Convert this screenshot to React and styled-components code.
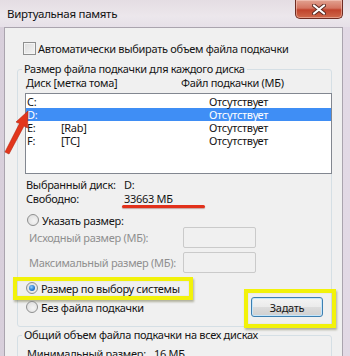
import styled, { createGlobalStyle } from "styled-components";

const GlobalStyle = createGlobalStyle`
  html, body {
    margin: 0;
    padding: 0;
  }
  body {
    font-family: "Noto Sans", "Open Sans", sans-serif;
    font-size: 11px;
    letter-spacing: -0.3px;
    color: #151515;
    white-space: nowrap;
  }
`;

const Window = styled.div`
  position: relative;
  width: 350px;
  height: 356px;
  overflow: hidden;
  display: flex;
  flex-direction: column;
  background: linear-gradient(90deg, #d8cfdb 0%, #e9e3ea 45%, #e2d9e5 100%);
`;

const TitleBar = styled.div`
  flex-shrink: 0;
  height: 27px;
  display: flex;
  align-items: flex-start;
  padding: 0 7px;
  background: linear-gradient(180deg, #e4dde3 0%, #ece7ec 60%, #e6e0e8 100%);
`;

const Title = styled.div`
  margin-top: 7px;
  line-height: 14px;
  font-size: 11.5px;
  color: #111;
`;

const CloseButton = styled.div`
  margin-left: auto;
  width: 46px;
  height: 18px;
  display: flex;
  align-items: center;
  justify-content: center;
  border: 1px solid #6e2c22;
  border-top: none;
  border-radius: 0 0 5px 5px;
  background: linear-gradient(180deg, #e2a291 0%, #d47561 45%, #c0432c 55%, #cf6a4c 100%);
  box-shadow: inset 0 0 0 1px rgba(255, 220, 210, 0.45);
`;

const Body = styled.div`
  flex: 1;
  margin: 0 7px 0 4px;
  padding: 13px 10px 0 12px;
  background: #f0f0f0;
  border: 1px solid #aaa4ae;
  border-bottom: none;
`;

const CheckRow = styled.label`
  display: flex;
  align-items: center;
  gap: 2px;
  height: 14px;
  margin-left: 6px;
`;

const CheckBox = styled.span`
  width: 13px;
  height: 13px;
  box-sizing: border-box;
  border: 1px solid #8e8f8f;
  background: linear-gradient(135deg, #dcdcdc 0%, #f4f4f4 100%);
  box-shadow: inset 0 0 0 1px #f4f4f4;
`;

const Group = styled.fieldset`
  margin: ${(p) => p.$top}px 0 0;
  padding: ${(p) => p.$pad || 0}px 0 ${(p) => p.$bottom || 0}px 8px;
  border: 1px solid #d5dfe5;
  border-radius: 3px;
  min-width: 0;
`;

const Legend = styled.legend`
  padding: 0 2px;
  margin-left: -4px;
  line-height: 14px;
`;

const Columns = styled.div`
  display: grid;
  grid-template-columns: ${(p) => p.$first}px 1fr;
  line-height: 14px;
  margin-top: ${(p) => p.$top || 0}px;
  margin-left: ${(p) => p.$left || 0}px;
`;

const ListBox = styled.div`
  width: 307px;
  height: 81px;
  box-sizing: border-box;
  margin: 3px 0 0 -1px;
  padding: 1px 0;
  border: 1px solid #828790;
  background: #fff;
`;

const DiskRow = styled.div`
  display: grid;
  grid-template-columns: 34px 148px 1fr;
  height: 13px;
  line-height: 13px;
  padding-left: 1px;
  background: ${(p) => (p.$selected ? "#3f8ef5" : "transparent")};
  color: ${(p) => (p.$selected ? "#fff" : "#151515")};
`;

const Value = styled.span`
  position: relative;
`;

const RedLine = styled.span`
  position: absolute;
  left: -2px;
  bottom: -2px;
  width: 83px;
  height: 3px;
  border-radius: 2px;
  background: #e2311b;
  box-shadow: 0 1px 1px rgba(120, 20, 10, 0.35);
`;

const RadioRow = styled.div`
  position: relative;
  display: flex;
  align-items: center;
  gap: 3px;
  height: 14px;
  margin-top: ${(p) => p.$top || 0}px;
  margin-left: ${(p) => p.$left || 0}px;
`;

const Radio = styled.span`
  width: 12px;
  height: 12px;
  box-sizing: border-box;
  border-radius: 50%;
  border: 1px solid #8e8f8f;
  background: radial-gradient(circle at 60% 60%, #f5f5f5 0%, #d9d9d9 100%);
  display: flex;
  align-items: center;
  justify-content: center;
  &::after {
    content: "";
    display: ${(p) => (p.$checked ? "block" : "none")};
    width: 6px;
    height: 6px;
    border-radius: 50%;
    background: radial-gradient(circle at 40% 35%, #8fd0ff 0%, #2a7bd0 55%, #1a4f95 100%);
  }
`;

const SizeRow = styled.div`
  display: grid;
  grid-template-columns: 154px 73px;
  align-items: center;
  margin-top: ${(p) => p.$top || 0}px;
  margin-left: 3px;
  color: #8f8f8f;
`;

const SizeInput = styled.div`
  height: 21px;
  box-sizing: border-box;
  border: 1px solid #cacaca;
  border-radius: 2px;
  background: #f0f0f0;
`;

const BottomRow = styled.div`
  display: flex;
  align-items: center;
  justify-content: space-between;
  margin-top: 2px;
  padding-right: 8px;
  height: 20px;
`;

const Marker = styled.span`
  position: absolute;
  left: ${(p) => p.$l}px;
  top: ${(p) => p.$t}px;
  width: ${(p) => p.$w}px;
  height: ${(p) => p.$h}px;
  box-sizing: border-box;
  border: 4px solid #f2f20a;
  box-shadow: 1px 2px 2px rgba(60, 60, 0, 0.35), inset 0 0 1px rgba(60, 60, 0, 0.3);
  pointer-events: none;
`;

const ButtonWrap = styled.div`
  position: relative;
`;

const Button = styled.button`
  display: block;
  width: 72px;
  height: 20px;
  padding: 0;
  font: inherit;
  letter-spacing: inherit;
  color: #151515;
  border: 1px solid #3c7fb1;
  border-radius: 3px;
  background: linear-gradient(180deg, #f4f4f4 0%, #ebebeb 48%, #dcdcdc 52%, #d0d0d0 100%);
  box-shadow: inset 0 0 0 1px #c5e6fb;
`;

const Arrow = styled.svg`
  position: absolute;
  left: 0;
  top: 0;
  pointer-events: none;
`;

const disks = [
  { letter: "C:", label: "", size: "Отсутствует" },
  { letter: "D:", label: "", size: "Отсутствует", selected: true },
  { letter: "E:", label: "[Rab]", size: "Отсутствует" },
  { letter: "F:", label: "[TC]", size: "Отсутствует" },
];

export default function App() {
  return (
    <>
      <GlobalStyle />
      <Window>
        <TitleBar>
          <Title>Виртуальная память</Title>
          <CloseButton>
            <svg width="14" height="11" viewBox="0 0 14 11">
              <path d="M2 1.5 L12 9.5 M12 1.5 L2 9.5" stroke="#5a2a22" strokeWidth="4" strokeLinecap="round" />
              <path d="M2 1.5 L12 9.5 M12 1.5 L2 9.5" stroke="#ffffff" strokeWidth="2.2" strokeLinecap="round" />
            </svg>
          </CloseButton>
        </TitleBar>
        <Body>
          <CheckRow>
            <CheckBox />
            <span>Автоматически выбирать объем файла подкачки</span>
          </CheckRow>

          <Group $top={7} $bottom={9}>
            <Legend>Размер файла подкачки для каждого диска</Legend>
            <Columns $first={155}>
              <span>Диск [метка тома]</span>
              <span>Файл подкачки (МБ)</span>
            </Columns>
            <ListBox>
              {disks.map((d) => (
                <DiskRow key={d.letter} $selected={d.selected}>
                  <span>{d.letter}</span>
                  <span>{d.label}</span>
                  <span>{d.size}</span>
                </DiskRow>
              ))}
            </ListBox>
            <Columns $first={98} $top={4}>
              <span>Выбранный диск:</span>
              <span>D:</span>
              <span>Свободно:</span>
              <Value>
                33663 МБ
                <RedLine />
              </Value>
            </Columns>

            <RadioRow $top={7} $left={1}>
              <Radio />
              <span>Указать размер:</span>
            </RadioRow>
            <SizeRow>
              <span>Исходный размер (МБ):</span>
              <SizeInput />
            </SizeRow>
            <SizeRow $top={4}>
              <span>Максимальный размер (МБ):</span>
              <SizeInput />
            </SizeRow>
            <RadioRow $top={8}>
              <Radio $checked />
              <span>Размер по выбору системы</span>
              <Marker $l={-13} $t={-4} $w={180} $h={23} />
            </RadioRow>
            <BottomRow>
              <RadioRow>
                <Radio />
                <span>Без файла подкачки</span>
              </RadioRow>
              <ButtonWrap>
                <Button>Задать</Button>
                <Marker $l={-7} $t={-8} $w={92} $h={39} />
              </ButtonWrap>
            </BottomRow>
          </Group>

          <Group $top={1} $pad={5}>
            <Legend>Общий объем файла подкачки на всех дисках</Legend>
            <Columns $first={127} $left={1}>
              <span>Минимальный размер:</span>
              <span>16 МБ</span>
            </Columns>
          </Group>
        </Body>
        <Arrow width="40" height="160" viewBox="0 0 40 160">
          <polygon
            points="28,111 27.5,128 24,126 9,154 5,152 19.5,123.5 16,122"
            fill="#e2361c"
            stroke="#b8240f"
            strokeWidth="0.6"
            strokeLinejoin="round"
          />
        </Arrow>
      </Window>
    </>
  );
}
